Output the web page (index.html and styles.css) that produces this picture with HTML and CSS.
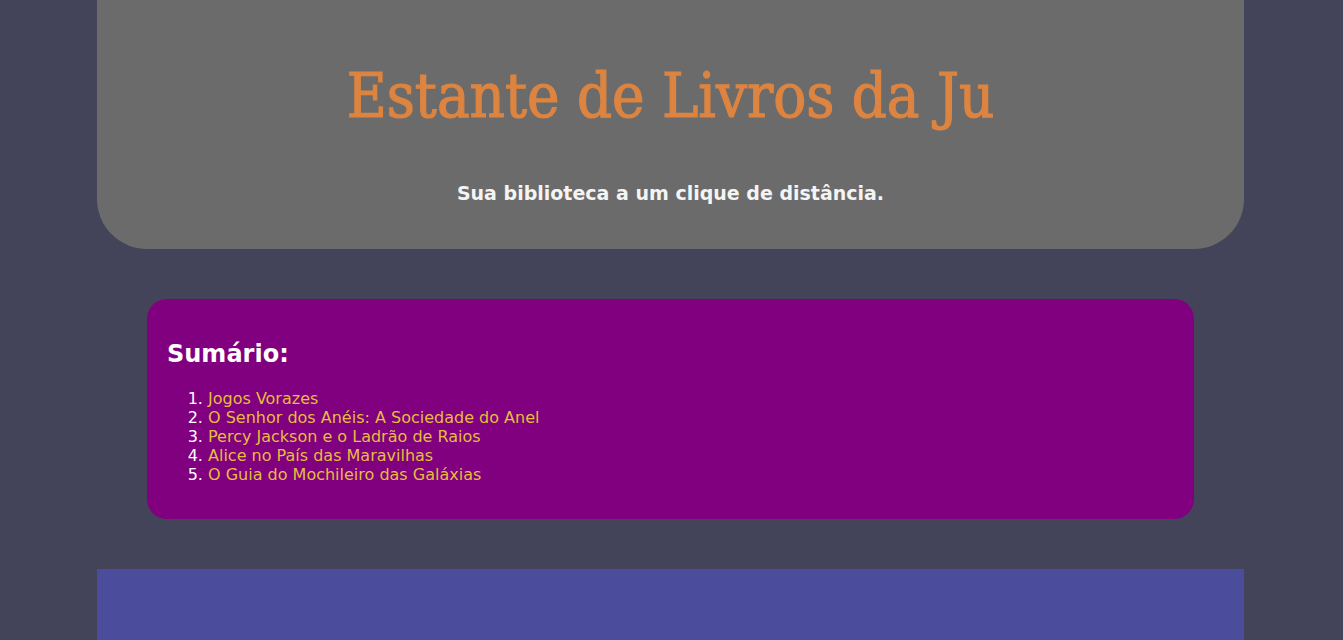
FILE: index.html
```html
<!DOCTYPE html>
<html lang="pt-BR">
<head>
<meta charset="utf-8">
<title>Estante de Livros da Ju</title>
<link rel="stylesheet" href="styles.css">
</head>
<body>
<div class="page">
  <header class="header">
    <h1 class="title">Estante de Livros da Ju</h1>
    <p class="subtitle">Sua biblioteca a um clique de distância.</p>
  </header>
  <nav class="summary">
    <h2 class="summary-title">Sumário:</h2>
    <ol class="summary-list">
      <li><a href="#">Jogos Vorazes</a></li>
      <li><a href="#">O Senhor dos Anéis: A Sociedade do Anel</a></li>
      <li><a href="#">Percy Jackson e o Ladrão de Raios</a></li>
      <li><a href="#">Alice no País das Maravilhas</a></li>
      <li><a href="#">O Guia do Mochileiro das Galáxias</a></li>
    </ol>
  </nav>
  <section class="book"></section>
</div>
</body>
</html>
```

FILE: styles.css
```css
html, body {
  margin: 0;
  padding: 0;
}
body {
  background: #434359;
  font-family: "DejaVu Sans", Verdana, sans-serif;
  color: #ffffff;
}
.page {
  width: 1147px;
  margin: 0 auto 0 97px;
  display: flex;
  flex-direction: column;
  gap: 50px;
}
.header {
  background: #6b6b6b;
  border-radius: 0 0 50px 50px;
  height: 249px;
  box-sizing: border-box;
  padding-top: 56px;
  text-align: center;
}
.title {
  margin: 0;
  font-family: "DejaVu Serif Condensed", "DejaVu Serif", serif;
  font-stretch: condensed;
  font-weight: normal;
  font-size: 61px;
  line-height: 80px;
  color: #dc8440;
  -webkit-text-stroke: 1.2px #dc8440;
}
.subtitle {
  margin: 46px 0 0;
  font-weight: bold;
  font-size: 19px;
  line-height: 22px;
  color: #f4f4f4;
}
.summary {
  margin: 0 50px;
  background: #800080;
  border-radius: 20px;
  height: 220px;
  box-sizing: border-box;
  padding: 40px 20px;
}
.summary-title {
  margin: 0 0 20px;
  font-size: 24px;
  line-height: 30px;
  font-weight: bold;
}
.summary-list {
  margin: 0;
  padding-left: 41px;
  font-size: 16px;
  line-height: 19px;
}
.summary-list a {
  color: #e5bd3c;
  text-decoration: none;
}
.book {
  background: #4b4c9c;
  height: 200px;
}
```
